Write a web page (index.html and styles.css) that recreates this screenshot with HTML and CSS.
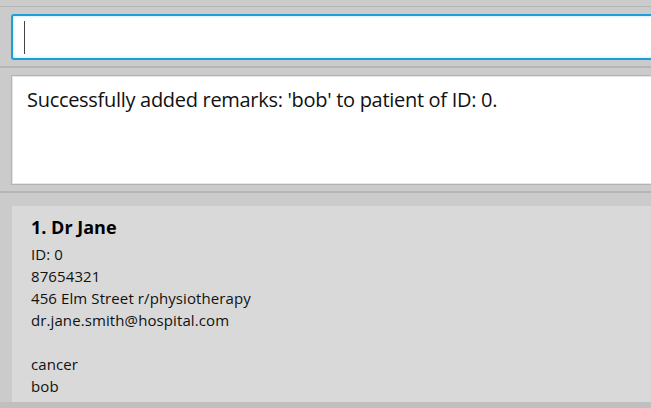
FILE: index.html
```html
<!DOCTYPE html>
<html>
<head>
<meta charset="utf-8">
<link rel="stylesheet" href="styles.css">
</head>
<body>
<div class="app">
  <div class="menu-edge"></div>
  <div class="command-pane">
    <div class="command-box"><span class="caret"></span></div>
  </div>
  <div class="result-pane">
    <div class="result-box">Successfully added remarks: 'bob' to patient of ID: 0.</div>
  </div>
  <div class="list-pane">
    <div class="card">
      <div class="name">1. Dr Jane</div>
      <div class="line">ID: 0</div>
      <div class="line">87654321</div>
      <div class="line">456 Elm Street r/physiotherapy</div>
      <div class="line">dr.jane.smith@hospital.com</div>
      <div class="line blank"></div>
      <div class="line">cancer</div>
      <div class="line">bob</div>
    </div>
    <div class="list-rest"></div>
  </div>
</div>
</body>
</html>
```
FILE: styles.css
```css
html, body {
  margin: 0;
  padding: 0;
  background: #cbcbcb;
  overflow: hidden;
}
.app {
  width: 651px;
  height: 408px;
  display: flex;
  flex-direction: column;
  font-family: "Open Sans", "Noto Sans", sans-serif;
  color: #000;
  overflow: hidden;
}
.menu-edge {
  height: 6px;
  border-bottom: 1px solid #b6b6b6;
  flex: none;
}
.command-pane {
  padding: 7px 0 6px 11px;
  border-bottom: 2px solid #b6b6b6;
  flex: none;
}
.command-box {
  height: 42px;
  width: 680px;
  background: #fff;
  border: 2px solid #1a9fd9;
  border-radius: 3px;
  box-shadow: inset 0 0 3px 1px #d6eef8;
  display: flex;
  align-items: center;
  padding-left: 11px;
}
.caret {
  width: 1px;
  height: 33px;
  background: #444;
}
.result-pane {
  padding: 7px 0 6px 11px;
  border-bottom: 2px solid #b6b6b6;
  flex: none;
}
.result-box {
  height: 110px;
  width: 680px;
  background: #fff;
  border: 1px solid #b3b3b3;
  box-shadow: inset 0 0 0 1px #e6e6e6;
  padding: 10px 0 0 15px;
  box-sizing: border-box;
  font-size: 20px;
  letter-spacing: -0.3px;
  color: #111;
}
.list-pane {
  flex: 1;
  padding-top: 13px;
  display: flex;
  flex-direction: column;
}
.card {
  margin-left: 12px;
  background: #d9d9d9;
  height: 196px;
  box-sizing: border-box;
  padding: 10px 0 0 19px;
  flex: none;
}
.name {
  font-size: 18px;
  font-weight: 700;
  line-height: 23px;
  margin-bottom: 4px;
}
.line {
  font-size: 15px;
  line-height: 22px;
  letter-spacing: 0.1px;
  color: #111;
}
.blank {
  height: 22px;
}
.list-rest {
  flex: 1;
  background: #c0c0c0;
}
```
